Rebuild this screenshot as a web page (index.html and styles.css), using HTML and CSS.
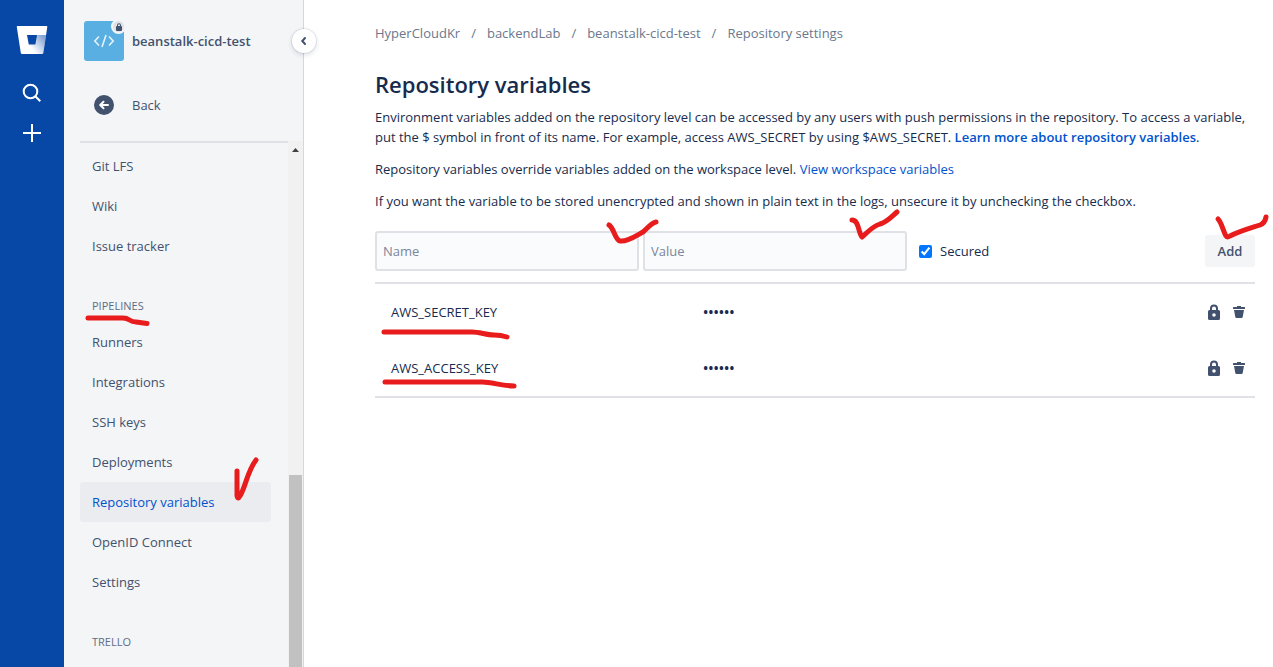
FILE: index.html
```html
<!DOCTYPE html>
<html lang="en">
<head>
    <meta charset="UTF-8">
    <meta name="viewport" content="width=device-width, initial-scale=1.0">
    <title>Repository variables</title>
    <link rel="stylesheet" href="styles.css">
</head>
<body>

<!-- shared icons -->
<svg class="sprite" aria-hidden="true">
    <symbol id="lock" viewBox="0 0 12 16">
        <path fill-rule="evenodd" d="M2 6V4.500a4 4 0 0 1 8 0V6h.5A1.500 1.500 0 0 1 12 7.500v7a1.500 1.500 0 0 1-1.500 1.500h-9A1.500 1.500 0 0 1 0 14.500v-7A1.500 1.500 0 0 1 1.500 6zM4 6h4V4.500a2 2 0 0 0-4 0zm2 3.200a1.800 1.800 0 1 0 0 3.600 1.800 1.800 0 0 0 0-3.600z"/>
    </symbol>
    <symbol id="lock-small" viewBox="0 0 6 8">
        <path fill-rule="evenodd" d="M1 3V2.200a2 2 0 0 1 4 0V3q1 0 1 1v3q0 1-1 1H1Q0 8 0 7V4q0-1 1-1zM2 3h2V2.200a1 1 0 0 0-2 0z"/>
    </symbol>
    <symbol id="trash" viewBox="0 0 12 12">
        <path d="M4 0h4v1h3.500a.5.500 0 0 1 .5.500V3H0V1.500A.5.500 0 0 1 .5 1H4zM1 4h10l-1.300 7a1.200 1.200 0 0 1-1.200 1h-5a1.200 1.200 0 0 1-1.200-1z"/>
    </symbol>
</svg>

<div class="global-nav">
    <a href="#" class="global-link logo" aria-label="Bitbucket">
        <svg width="32" height="28" viewBox="0 0 32 28">
            <defs>
                <linearGradient id="fade" x1="1" y1="0.1" x2="0.25" y2="0.8">
                    <stop offset="0.1" stop-color="#0747a6" stop-opacity="0.5"/>
                    <stop offset="1" stop-color="#0747a6" stop-opacity="0"/>
                </linearGradient>
            </defs>
            <path fill="#fff" d="M1.500 0h29q1 0 .8 1l-4 26q-.2 1-1.200 1H6q-1 0-1.200-1L.8 1Q.6 0 1.500 0z"/>
            <path fill="url(#fade)" d="M20 9h10.100l-2.800 18q-.2 1-1.200 1h-11L12.500 18.500h6z"/>
            <path fill="#0747a6" d="M11 9h10l-1.600 9.500h-6.600z"/>
        </svg>
    </a>
    <a href="#" class="global-link" aria-label="Search">
        <svg width="20" height="20" viewBox="0 0 20 20" fill="none" stroke="#fff" stroke-width="2">
            <circle cx="8.500" cy="8.500" r="6.800"/>
            <path d="M13.300 13.300l5 5"/>
        </svg>
    </a>
    <a href="#" class="global-link" aria-label="Create">
        <svg width="20" height="20" viewBox="0 0 20 20" stroke="#fff" stroke-width="2">
            <path d="M10 1v18M1 10h18"/>
        </svg>
    </a>
</div>

<div class="sidebar">
    <button class="collapse-btn" aria-label="Collapse sidebar">
        <svg width="8" height="10" viewBox="0 0 8 10" fill="none" stroke="#42526e" stroke-width="2" stroke-linecap="round">
            <path d="M5 2L2.300 5 5 8"/>
        </svg>
    </button>

    <div class="repo-header">
        <div class="repo-avatar">
            <svg width="22" height="14" viewBox="0 0 22 14" fill="none" stroke="#e4f3fb" stroke-width="1.600">
                <path d="M6 2.500L1.800 7 6 11.500M16 2.500L20.200 7 16 11.500M13 1L9 13"/>
            </svg>
            <span class="repo-badge"><svg width="6" height="8"><use href="#lock-small"/></svg></span>
        </div>
        <div class="repo-name">beanstalk-cicd-test</div>
    </div>

    <a href="#" class="back-link">
        <svg width="20" height="20" viewBox="0 0 20 20">
            <circle cx="10" cy="10" r="10" fill="#42526e"/>
            <path d="M14 10H6.500M9.500 6.800L6.200 10l3.300 3.200" fill="none" stroke="#fff" stroke-width="2" stroke-linecap="round" stroke-linejoin="round"/>
        </svg>
        Back
    </a>

    <div class="nav-area">
        <nav class="nav-list">
            <a href="#" class="nav-item">Git LFS</a>
            <a href="#" class="nav-item">Wiki</a>
            <a href="#" class="nav-item">Issue tracker</a>
            <h2 class="nav-heading">Pipelines
                <svg class="mark mark-pipelines" width="66" height="12" viewBox="0 0 66 12"><path d="M3 3h35c7 0 6 4 13 4l11 1.500"/></svg>
            </h2>
            <a href="#" class="nav-item">Runners</a>
            <a href="#" class="nav-item">Integrations</a>
            <a href="#" class="nav-item">SSH keys</a>
            <a href="#" class="nav-item">Deployments</a>
            <a href="#" class="nav-item active">Repository variables
                <svg class="mark mark-nav" width="28" height="46" viewBox="0 0 28 46"><path d="M4 14v25q1 4 3 0c6-10 7-24 16-36"/></svg>
            </a>
            <a href="#" class="nav-item">OpenID Connect</a>
            <a href="#" class="nav-item">Settings</a>
            <h2 class="nav-heading">Trello</h2>
        </nav>
        <div class="scrollbar">
            <svg width="7" height="4" viewBox="0 0 7 4"><path d="M3.500 0L7 4H0z" fill="#404040"/></svg>
            <div class="scroll-thumb"></div>
        </div>
    </div>
</div>

<main class="content">
    <div class="breadcrumbs">
        <a href="#">HyperCloudKr</a><span>/</span>
        <a href="#">backendLab</a><span>/</span>
        <a href="#">beanstalk-cicd-test</a><span>/</span>
        <a href="#">Repository settings</a>
    </div>

    <h1>Repository variables</h1>
    <p>Environment variables added on the repository level can be accessed by any users with push permissions in the repository. To access a variable, put the $ symbol in front of its name. For example, access AWS_SECRET by using $AWS_SECRET. <a href="#" class="strong-link">Learn more about repository variables</a>.</p>
    <p>Repository variables override variables added on the workspace level. <a href="#">View workspace variables</a></p>
    <p>If you want the variable to be stored unencrypted and shown in plain text in the logs, unsecure it by unchecking the checkbox.</p>

    <form class="add-form">
        <div class="field">
            <input type="text" class="text-field" placeholder="Name" aria-label="Name">
            <svg class="mark mark-name" width="54" height="28" viewBox="0 0 54 28"><path d="M4 7c5 3 6 15 11 16 8 1 17-6 23-9 5-4 8-9 13-10"/></svg>
        </div>
        <div class="field">
            <input type="text" class="text-field" placeholder="Value" aria-label="Value">
            <svg class="mark mark-value" width="54" height="32" viewBox="0 0 54 32"><path d="M4 11c7 0 6 12 10 17 4-3 9-10 18-13 7-2 11-7 17-12"/></svg>
        </div>
        <label class="secured"><input type="checkbox" checked>Secured</label>
        <div class="add-wrap">
            <button type="button" class="add-btn">Add</button>
            <svg class="mark mark-add" width="56" height="28" viewBox="0 0 56 28"><path d="M4 6c4 4 5 12 8 17q1 2 4 0c10-5 21-8 30-11q5-2 6-8"/></svg>
        </div>
    </form>

    <table class="variables">
        <tr>
            <td class="var-name">AWS_SECRET_KEY
                <svg class="mark mark-row" width="130" height="12" viewBox="0 0 130 12"><path d="M3 3h88c8 0 14 3 22 3q7 0 13 2"/></svg>
            </td>
            <td class="var-value">••••••</td>
            <td class="var-actions">
                <div class="actions">
                    <button aria-label="Secured variable"><svg width="12" height="16"><use href="#lock"/></svg></button>
                    <button aria-label="Delete variable"><svg width="12" height="12"><use href="#trash"/></svg></button>
                </div>
            </td>
        </tr>
        <tr>
            <td class="var-name">AWS_ACCESS_KEY
                <svg class="mark mark-row-last" width="136" height="12" viewBox="0 0 136 12"><path d="M3 3h97c10 0 20 4 32 4"/></svg>
            </td>
            <td class="var-value">••••••</td>
            <td class="var-actions">
                <div class="actions">
                    <button aria-label="Secured variable"><svg width="12" height="16"><use href="#lock"/></svg></button>
                    <button aria-label="Delete variable"><svg width="12" height="12"><use href="#trash"/></svg></button>
                </div>
            </td>
        </tr>
    </table>
</main>

</body>
</html>
```
FILE: styles.css
```css
* {
    box-sizing: border-box;
}
body {
    margin: 0;
    display: flex;
    height: 100vh;
    overflow: hidden;
    font-family: "Open Sans", "Noto Sans", sans-serif;
    font-size: 13px;
    line-height: 20px;
    color: #172b4d;
    background-color: #ffffff;
}
a {
    color: #0052cc;
    text-decoration: none;
}
svg {
    display: block;
}
button, input {
    font-family: inherit;
    font-size: inherit;
}
.sprite {
    position: absolute;
    width: 0;
    height: 0;
}

/* blue bar */
.global-nav {
    flex: 0 0 64px;
    display: flex;
    flex-direction: column;
    align-items: center;
    padding-top: 20px;
    background-color: #0747a6;
}
.global-link {
    width: 40px;
    height: 40px;
    display: flex;
    align-items: center;
    justify-content: center;
}
.logo {
    margin-bottom: 13px;
}

/* sidebar */
.sidebar {
    position: relative;
    flex: 0 0 240px;
    display: flex;
    flex-direction: column;
    padding-top: 21px;
    background-color: #f4f5f7;
    border-right: 1px solid #d5d7db;
}
.collapse-btn {
    position: absolute;
    top: 29px;
    right: -13px;
    width: 24px;
    height: 24px;
    padding: 0;
    display: flex;
    align-items: center;
    justify-content: center;
    border: none;
    border-radius: 50%;
    background-color: #ffffff;
    box-shadow: 0 0 0 1px rgba(9, 30, 66, 0.08), 0 2px 4px 1px rgba(9, 30, 66, 0.1);
}
.repo-header {
    display: flex;
    align-items: center;
    gap: 8px;
    padding-left: 20px;
}
.repo-avatar {
    position: relative;
    width: 40px;
    height: 40px;
    display: flex;
    align-items: center;
    justify-content: center;
    border-radius: 3px;
    background-color: #59afe1;
}
.repo-badge {
    position: absolute;
    top: -2px;
    right: -2px;
    width: 15px;
    height: 15px;
    display: flex;
    align-items: center;
    justify-content: center;
    border: 2px solid #f4f5f7;
    border-radius: 50%;
    background-color: #dfe1e6;
    fill: #42526e;
}
.repo-name {
    font-weight: 600;
    color: #42526e;
}
.back-link {
    display: flex;
    align-items: center;
    gap: 18px;
    height: 40px;
    margin: 24px 0 16px;
    padding-left: 30px;
    color: #42526e;
}
.nav-area {
    flex: 1;
    display: flex;
    min-height: 0;
}
.nav-list {
    flex: 1;
    margin-left: 16px;
    padding: 3px 17px 0 0;
    border-top: 2px solid #dfe1e6;
    overflow: hidden;
}
.nav-item {
    position: relative;
    display: block;
    padding: 10px 12px;
    border-radius: 3px;
    color: #42526e;
}
.nav-item.active {
    background-color: #ebecf0;
    color: #0052cc;
}
.nav-heading {
    position: relative;
    margin: 0;
    padding: 32px 12px 8px;
    font-size: 11px;
    font-weight: 400;
    line-height: 16px;
    text-transform: uppercase;
    color: #5e6c84;
}
.scrollbar {
    width: 15px;
    display: flex;
    flex-direction: column;
    align-items: center;
    padding-top: 7px;
    background-color: #f1f1f1;
}
.scroll-thumb {
    width: 13px;
    height: 37%;
    margin-top: auto;
    background-color: #c1c1c1;
}

/* page */
.content {
    flex: 1;
    min-width: 0;
    padding: 23px 18px 0 71px;
}
.breadcrumbs {
    display: flex;
    gap: 11px;
    color: #6b778c;
}
.breadcrumbs a {
    color: #6b778c;
}
h1 {
    margin: 27px 0 9px;
    font-size: 22px;
    font-weight: 600;
    line-height: 28px;
}
p {
    margin: 0 0 12px;
}
.strong-link {
    font-weight: 600;
}
.add-form {
    display: flex;
    align-items: center;
    gap: 4px;
    margin: 20px 0 11px;
}
.field {
    position: relative;
    flex: 0 0 30%;
}
.text-field {
    display: block;
    width: 100%;
    height: 40px;
    padding: 8px 6px;
    border: 2px solid #dfe1e6;
    border-radius: 3px;
    background-color: #fafbfc;
    color: #172b4d;
}
.text-field::placeholder {
    color: #7a869a;
}
.secured {
    display: flex;
    align-items: center;
    gap: 8px;
    margin-left: 8px;
}
.secured input {
    width: 13px;
    height: 13px;
    margin: 0;
    accent-color: #0075ff;
}
.add-wrap {
    position: relative;
    margin-left: auto;
}
.add-btn {
    display: block;
    min-width: 50px;
    height: 32px;
    padding: 0 12px;
    border: none;
    border-radius: 3px;
    background-color: #f4f5f7;
    font-weight: 600;
    color: #42526e;
}
.variables {
    width: 100%;
    table-layout: fixed;
    border-collapse: separate;
    border-spacing: 0;
    border-top: 2px solid #dfe1e6;
    border-bottom: 2px solid #dfe1e6;
}
.variables td {
    height: 56px;
    padding: 0 16px;
}
.variables .var-name {
    position: relative;
    width: 312px;
}
.var-value {
    font-size: 14px;
    font-weight: 600;
}
.variables .var-actions {
    width: 80px;
    padding: 0 10px;
}
.actions {
    display: flex;
    align-items: center;
    justify-content: flex-end;
    gap: 13px;
}
.actions button {
    padding: 0;
    border: none;
    background: none;
    fill: #42526e;
}

/* red pen marks */
.mark {
    position: absolute;
    z-index: 1;
    fill: none;
    stroke: #e81c1c;
    stroke-width: 5;
    stroke-linecap: round;
    stroke-linejoin: round;
    pointer-events: none;
}
.mark-pipelines {
    left: 5px;
    top: 49px;
}
.mark-nav {
    left: 153px;
    top: -25px;
}
.mark-name {
    right: -20px;
    top: -13px;
}
.mark-value {
    right: 5px;
    top: -22px;
}
.mark-add {
    right: -15px;
    top: -22px;
}
.mark-row {
    left: 6px;
    top: 45px;
}
.mark-row-last {
    left: 7px;
    top: 39px;
}
```
